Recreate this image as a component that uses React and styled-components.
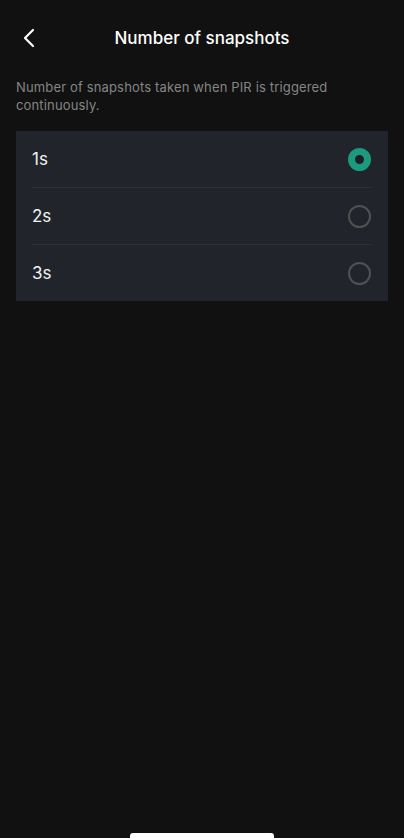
import { useState } from "react";
import styled, { createGlobalStyle } from "styled-components";

const GlobalStyle = createGlobalStyle`
  html, body {
    margin: 0;
    padding: 0;
    background: #111111;
  }
  body {
    font-family: Inter, "Noto Sans", sans-serif;
    -webkit-font-smoothing: antialiased;
  }
`;

const options = ["1s", "2s", "3s"];

const App = () => {
  const [selected, setSelected] = useState("1s");

  return (
    <Screen>
      <GlobalStyle />
      <Header>
        <BackBtn aria-label="back">
          <svg width="14" height="20" viewBox="0 0 14 20" fill="none">
            <path
              d="M11 2L3 10L11 18"
              stroke="#ffffff"
              strokeWidth="2.2"
              strokeLinecap="round"
              strokeLinejoin="round"
            />
          </svg>
        </BackBtn>
        <Title>Number of snapshots</Title>
      </Header>
      <Description>
        Number of snapshots taken when PIR is triggered continuously.
      </Description>
      <Card>
        {options.map((opt, i) => (
          <Row key={opt} $last={i === options.length - 1} onClick={() => setSelected(opt)}>
            <Label>{opt}</Label>
            <Radio $checked={selected === opt} />
          </Row>
        ))}
      </Card>
      <HomeBar />
    </Screen>
  );
};

const Screen = styled.div`
  position: relative;
  width: 404px;
  height: 838px;
  background: #111111;
  display: flex;
  flex-direction: column;
  overflow: hidden;
`;

const Header = styled.div`
  position: relative;
  height: 40px;
  margin-top: 18px;
  display: flex;
  align-items: center;
  justify-content: center;
`;

const BackBtn = styled.button`
  position: absolute;
  left: 16px;
  top: 50%;
  transform: translateY(-50%);
  background: none;
  border: none;
  padding: 6px;
  display: flex;
  cursor: pointer;
`;

const Title = styled.h1`
  margin: 0;
  font-size: 17px;
  font-weight: 450;
  color: #ffffff;
`;

const Description = styled.p`
  margin: 20px 16px 0;
  font-size: 13px;
  line-height: 18px;
  letter-spacing: 0.15px;
  color: #858585;
  max-width: 330px;
`;

const Card = styled.div`
  margin: 17px 16px 0;
  background: #21242b;
  padding: 0 16px;
`;

const Row = styled.div`
  height: 56px;
  display: flex;
  align-items: center;
  justify-content: space-between;
  border-bottom: ${(p) => (p.$last ? "none" : "1px solid #2d3038")};
  cursor: pointer;
`;

const Label = styled.span`
  font-size: 17px;
  font-weight: 400;
  color: #f2f2f2;
`;

const Radio = styled.span`
  box-sizing: border-box;
  width: 23px;
  height: 23px;
  border-radius: 50%;
  margin-right: 1px;
  border: ${(p) => (p.$checked ? "7.5px solid #1b9a80" : "2px solid #505152")};
  background: ${(p) => (p.$checked ? "#1d1f26" : "transparent")};
`;

const HomeBar = styled.div`
  position: absolute;
  left: 130px;
  bottom: 0;
  width: 144px;
  height: 5px;
  border-radius: 3px 3px 0 0;
  background: #ffffff;
`;

export default App;
